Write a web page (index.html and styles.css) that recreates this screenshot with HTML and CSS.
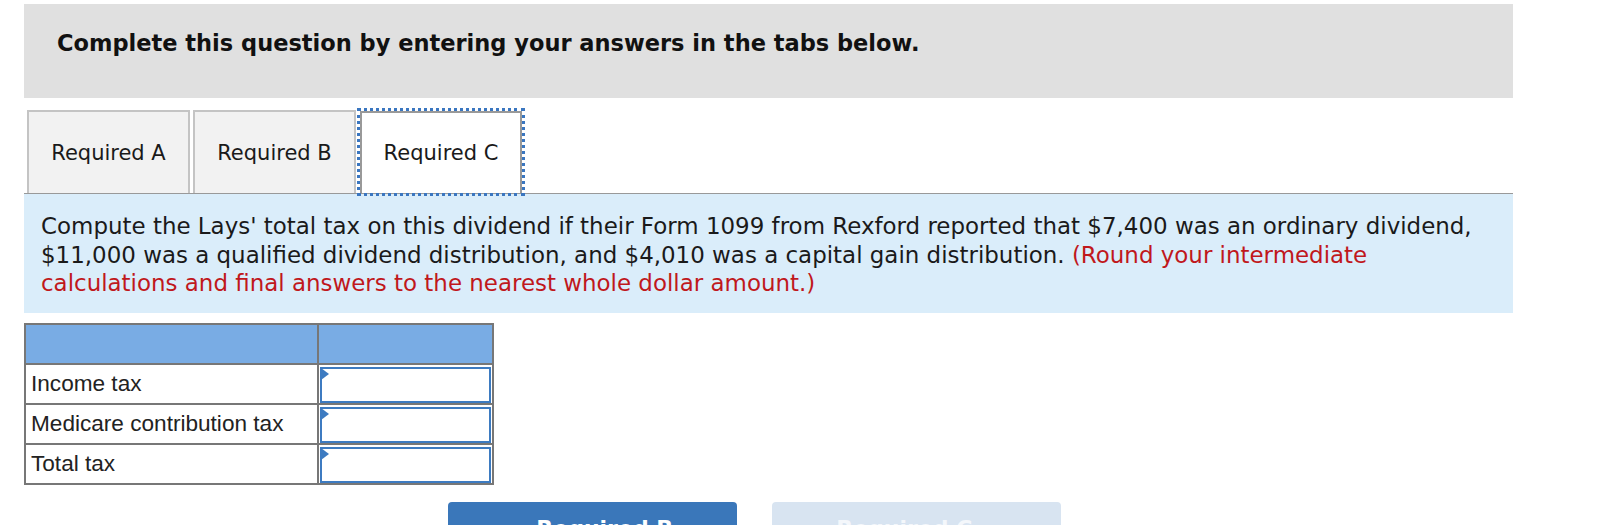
FILE: index.html
```html
<!DOCTYPE html>
<html>
<head>
<meta charset="utf-8">
<link rel="stylesheet" href="styles.css">
</head>
<body>
<div class="page">
  <div class="banner">Complete this question by entering your answers in the tabs below.</div>
  <div class="tabs">
    <div class="tab">Required A</div>
    <div class="tab">Required B</div>
    <div class="tab active">Required C</div>
  </div>
  <div class="prompt">Compute the Lays' total tax on this dividend if their Form 1099 from Rexford reported that $7,400 was an ordinary dividend, $11,000 was a qualified dividend distribution, and $4,010 was a capital gain distribution. <span class="hint">(Round your intermediate calculations and final answers to the nearest whole dollar amount.)</span></div>
  <table class="grid">
    <tr class="head"><td class="label"></td><td class="val"></td></tr>
    <tr><td class="label">Income tax</td><td class="val"><div class="input"><span class="mark"></span></div></td></tr>
    <tr><td class="label">Medicare contribution tax</td><td class="val"><div class="input"><span class="mark"></span></div></td></tr>
    <tr><td class="label">Total tax</td><td class="val"><div class="input"><span class="mark"></span></div></td></tr>
  </table>
  <div class="nav">
    <div class="btn prev">&lsaquo; &nbsp;Required B</div>
    <div class="btn next">Required C &nbsp;&rsaquo;</div>
  </div>
</div>
</body>
</html>
```
FILE: styles.css
```css
html, body { margin: 0; padding: 0; background: #fff; }
body { font-family: "DejaVu Sans", Verdana, sans-serif; color: #1a1a1a; }
.page { margin-left: 24px; width: 1489px; padding-top: 4px; }
.banner {
  background: #e0e0e0;
  height: 94px;
  box-sizing: border-box;
  padding: 26px 0 0 33px;
  font-weight: bold;
  font-size: 22.5px;
  line-height: 26px;
  color: #111;
}
.tabs {
  display: flex;
  gap: 3px;
  padding-left: 3px;
  margin-top: 12px;
  border-bottom: 1px solid #999;
  height: 83px;
}
.tab {
  width: 163px;
  box-sizing: border-box;
  border: 2px solid #c4c4c4;
  border-bottom: none;
  background: #f2f2f2;
  font-size: 21px;
  display: flex;
  align-items: center;
  justify-content: center;
  color: #1a1a1a;
}
.tab.active {
  background: #fff;
  border-color: #999;
  width: 162px;
  margin-left: 1px;
  margin-top: 1px;
  outline: 3px dotted #3a76c0;
  outline-offset: 0;
}
.prompt {
  background: #daedfa;
  padding: 18px 20px 10px 17px;
  font-size: 22.95px;
  line-height: 28.5px;
  color: #1a1a1a;
  height: 119px;
  box-sizing: border-box;
}
.hint { color: #c0181c; }
.grid {
  margin-top: 10px;
  border-collapse: collapse;
  font-family: "Liberation Sans", Arial, sans-serif;
  font-size: 22.6px;
}
.grid td {
  border: 2px solid #777;
  padding: 0;
  height: 38px;
}
.grid .label { width: 286px; padding-left: 5px; color: #222; }
.grid .val { width: 173px; }
.grid .head td { background: #79ace4; }
.input {
  margin: 2px 1px 0 1px;
  border: 2px solid #3d7bc1;
  box-sizing: border-box;
  height: 36px;
  background: #fff;
  position: relative;
}
.mark {
  position: absolute;
  left: -1px;
  top: -1px;
  width: 0; height: 0;
  border-top: 6px solid transparent;
  border-bottom: 6px solid transparent;
  border-left: 8px solid #3d7bc1;
}
.nav {
  display: flex;
  gap: 35px;
  margin-top: 17px;
  padding-left: 424px;
}
.btn {
  width: 289px;
  height: 46px;
  border-radius: 4px 4px 0 0;
  font-weight: bold;
  font-size: 22px;
  color: #fff;
  text-align: center;
  padding-top: 14px;
  box-sizing: border-box;
}
.prev { background: #3a77ba; }
.next { background: #d8e4f1; color: #f4f7fb; }
```
